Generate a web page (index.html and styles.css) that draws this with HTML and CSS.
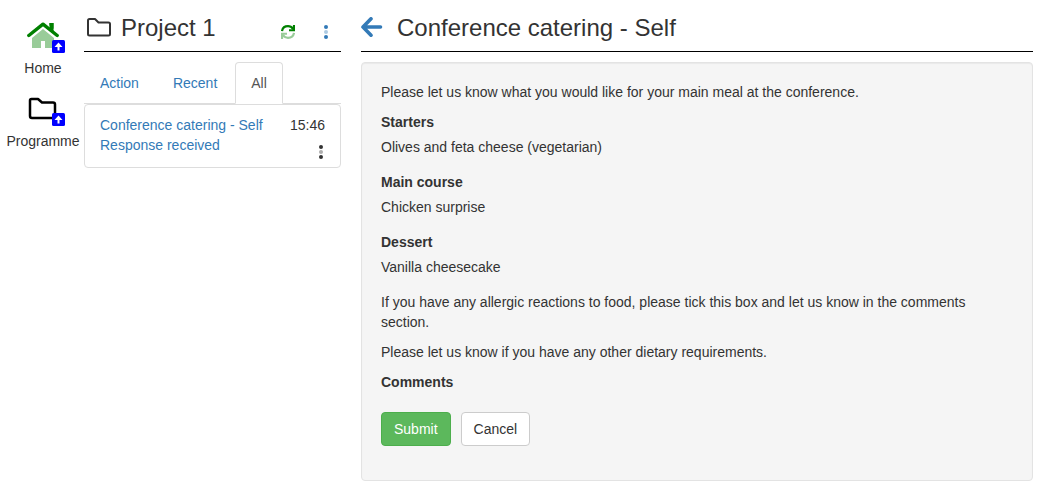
FILE: index.html
```html
<!DOCTYPE html>
<html lang="en">
<head>
  <meta charset="UTF-8">
  <meta name="viewport" content="width=device-width, initial-scale=1">
  <title>Project 1</title>
  <link rel="stylesheet" href="styles.css">
</head>
<body>
  <div class="layout">
    <nav class="sidebar">
      <a class="shortcut" href="#home">
        <span class="shortcut-icon">
          <svg width="32" height="28" viewBox="0 0 32 28">
            <path d="M5 16 L16 7 L27 16 V26 H18 V19 H14 V26 H5 Z" fill="#99cc99"/>
            <path d="M22.5 1 H26.5 V12 L22.5 8 Z" fill="#008000"/>
            <path d="M1.8 13.5 L16 2.2 L30.2 13.5" fill="none" stroke="#fff" stroke-width="6"/>
            <path d="M22.5 1 H26.5 V11 L22.5 8 Z" fill="#008000"/>
            <path d="M1.8 13.5 L16 2.2 L30.2 13.5" fill="none" stroke="#008000" stroke-width="3.4" stroke-linecap="round" stroke-linejoin="round"/>
          </svg>
          <svg class="badge" width="13" height="13" viewBox="0 0 13 13">
            <rect width="13" height="13" rx="1.5" fill="#0000ff"/>
            <path d="M6.5 2.5 L10.5 7 H7.5 V10.5 H5.5 V7 H2.5 Z" fill="#fff"/>
          </svg>
        </span>
        Home
      </a>
      <a class="shortcut" href="#programme">
        <span class="shortcut-icon">
          <svg width="32" height="28" viewBox="0 0 32 28">
            <path d="M4.5 4 H11 L15 7.5 H26 Q28 7.5 28 9.500 V21 Q28 23 26 23 H5 Q3 23 3 21 V5.5 Q3 4 4.5 4 Z" fill="none" stroke="#000" stroke-width="2.5" stroke-linejoin="round"/>
          </svg>
          <svg class="badge" width="13" height="13" viewBox="0 0 13 13">
            <rect width="13" height="13" rx="1.5" fill="#0000ff"/>
            <path d="M6.5 2.5 L10.5 7 H7.5 V10.5 H5.5 V7 H2.5 Z" fill="#fff"/>
          </svg>
        </span>
        Programme
      </a>
    </nav>

    <section class="project">
      <header class="header">
        <svg class="folder-icon" width="30" height="26" viewBox="0 0 30 26">
          <path d="M5.5 4 H11 L14.500 7.500 H24.500 Q26 7.500 26 9 V19 Q26 20.500 24.500 20.500 H5.500 Q4 20.500 4 19 V5.500 Q4 4 5.500 4 Z" fill="none" stroke="#333" stroke-width="2" stroke-linejoin="round"/>
        </svg>
        <h1 class="title">Project 1</h1>
        <button class="icon-btn" type="button" aria-label="Refresh">
          <svg width="14" height="14" viewBox="0 0 14 14" fill="none" stroke-width="2.2">
            <path d="M1 6.2 C1.500 3 4 1.200 7 1.200 C9 1.200 10.800 2.200 12 4" stroke="#008000"/>
            <path d="M14 0 V6.2 H8 V4.3 H11.5 L12 0 Z" fill="#008000"/>
            <path d="M13 7.800 C12.500 11 10 12.800 7 12.800 C5 12.800 3.200 11.800 2 10" stroke="#99cc99"/>
            <path d="M0 14 V7.8 H6 V9.7 H2.5 L2 14 Z" fill="#99cc99"/>
          </svg>
        </button>
        <button class="icon-btn" type="button" aria-label="Project menu">
          <svg width="6" height="14" viewBox="0 0 6 14" fill="#337ab7">
            <circle cx="3" cy="2" r="2"/>
            <circle cx="3" cy="7" r="2" opacity="0.4"/>
            <circle cx="3" cy="12" r="2"/>
          </svg>
        </button>
      </header>

      <ul class="tabs">
        <li><a class="tab" href="#action">Action</a></li>
        <li><a class="tab" href="#recent">Recent</a></li>
        <li><a class="tab active" href="#all">All</a></li>
      </ul>

      <div class="list-item">
        <a class="item-link" href="#item">Conference catering - Self<br>Response received</a>
        <div class="item-side">
          <time>15:46</time>
          <button class="icon-btn" type="button" aria-label="Item menu">
            <svg width="6" height="14" viewBox="0 0 6 14" fill="#333">
              <circle cx="3" cy="2" r="2"/>
              <circle cx="3" cy="7" r="2" opacity="0.4"/>
              <circle cx="3" cy="12" r="2"/>
            </svg>
          </button>
        </div>
      </div>
    </section>

    <main class="content">
      <header class="header">
        <a class="back" href="#back" aria-label="Back">
          <svg width="22" height="22" viewBox="0 0 22 22">
            <path d="M10 1.8 L2 10 L10 18.200 M2 10 H19.500" fill="none" stroke="#337ab7" stroke-width="3.6" stroke-linecap="round" stroke-linejoin="round"/>
          </svg>
        </a>
        <h2 class="title">Conference catering - Self</h2>
      </header>

      <form class="well">
        <p>Please let us know what you would like for your main meal at the conference.</p>
        <dl class="answers">
          <dt>Starters</dt>
          <dd>Olives and feta cheese (vegetarian)</dd>
          <dt>Main course</dt>
          <dd>Chicken surprise</dd>
          <dt>Dessert</dt>
          <dd>Vanilla cheesecake</dd>
        </dl>
        <p>If you have any allergic reactions to food, please tick this box and let us know in the comments section.</p>
        <p>Please let us know if you have any other dietary requirements.</p>
        <p class="comments">Comments</p>
        <div class="buttons">
          <button class="btn btn-success" type="submit">Submit</button>
          <button class="btn" type="button">Cancel</button>
        </div>
      </form>
    </main>
  </div>
</body>
</html>
```

FILE: styles.css
```css
* {
  box-sizing: border-box;
}
body {
  margin: 0;
  font-family: "Liberation Sans", Arial, sans-serif;
  font-size: 14px;
  line-height: 20px;
  color: #333;
  background: #fff;
}
a {
  color: #337ab7;
  text-decoration: none;
}
svg {
  display: block;
}
.layout {
  display: grid;
  grid-template-columns: 84px 257px 1fr;
  padding: 15px 10px 7px 0;
}

/* left shortcuts */
.sidebar {
  padding: 7px 0 0 2px;
}
.shortcut {
  display: flex;
  flex-direction: column;
  align-items: center;
  gap: 8px;
  margin-bottom: 17px;
  color: #333;
}
.shortcut-icon {
  position: relative;
}
.badge {
  position: absolute;
  right: -6px;
  bottom: -3px;
}

.header {
  display: flex;
  align-items: center;
  height: 37px;
  padding-bottom: 10px;
  border-bottom: 1px solid #000;
}
.title {
  flex: 1;
  margin: 0;
  font-size: 24px;
  font-weight: 500;
  line-height: 26px;
}
.folder-icon {
  margin-right: 7px;
}
.back {
  margin-right: 14px;
}
.icon-btn {
  padding: 0;
  border: 0;
  background: none;
  cursor: pointer;
}
.header .icon-btn {
  margin: 8px 12px 0 16px;
}

/* tabs */
.tabs {
  display: flex;
  gap: 2px;
  margin: 10px 0 0;
  padding: 0;
  list-style: none;
  border-bottom: 1px solid #ddd;
}
.tab {
  display: block;
  margin-bottom: -1px;
  padding: 10px 15px;
  border: 1px solid transparent;
  border-radius: 4px 4px 0 0;
}
.tab.active {
  color: #555;
  background: #fff;
  border-color: #ddd #ddd #fff;
}
.list-item {
  display: flex;
  justify-content: space-between;
  padding: 10px 15px 8px;
  border: 1px solid #ddd;
  border-radius: 4px;
}
.item-side {
  display: flex;
  flex-direction: column;
  align-items: flex-end;
  gap: 10px;
}
.item-side .icon-btn {
  height: 14px;
  margin-right: 1px;
}

/* form */
.content {
  padding-left: 20px;
}
.well {
  margin-top: 10px;
  padding: 19px 19px 34px;
  background: #f5f5f5;
  border: 1px solid #e3e3e3;
  border-radius: 4px;
  box-shadow: inset 0 1px 1px rgba(0, 0, 0, 0.05);
}
.well p {
  margin: 0 0 10px;
}
.answers {
  margin: 0;
}
.answers dt,
.well .comments {
  font-weight: bold;
}
.answers dt {
  margin-bottom: 5px;
}
.answers dd {
  margin: 0 0 15px;
}
.well .comments {
  margin-bottom: 20px;
}
.buttons {
  display: flex;
  gap: 10px;
}
.btn {
  padding: 6px 12px;
  font: inherit;
  color: #333;
  background: #fff;
  border: 1px solid #ccc;
  border-radius: 4px;
  cursor: pointer;
}
.btn-success {
  color: #fff;
  background: #5cb85c;
  border-color: #4cae4c;
}
```
